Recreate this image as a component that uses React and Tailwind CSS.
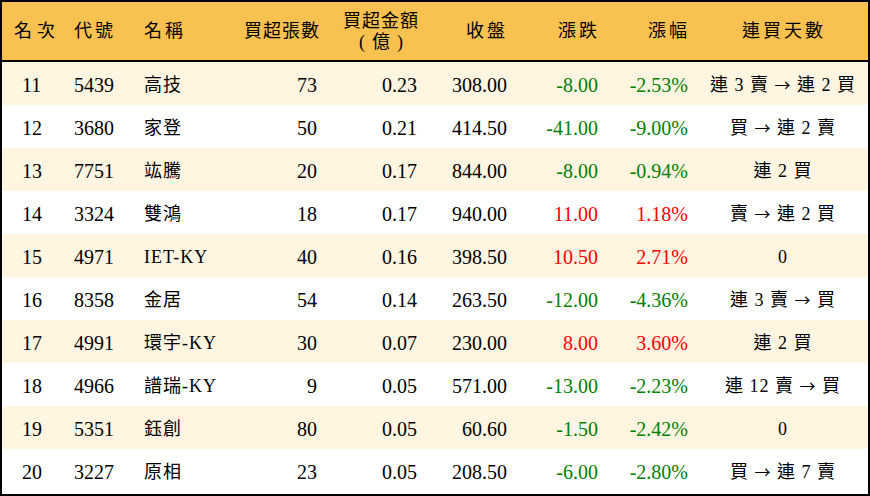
import React from 'react';

const rows = [
  { rank: 11, code: '5439', name: '高技', lots: 73, amount: '0.23', close: '308.00', change: '-8.00', pct: '-2.53%', streak: '連 3 賣 → 連 2 買' },
  { rank: 12, code: '3680', name: '家登', lots: 50, amount: '0.21', close: '414.50', change: '-41.00', pct: '-9.00%', streak: '買 → 連 2 賣' },
  { rank: 13, code: '7751', name: '竑騰', lots: 20, amount: '0.17', close: '844.00', change: '-8.00', pct: '-0.94%', streak: '連 2 買' },
  { rank: 14, code: '3324', name: '雙鴻', lots: 18, amount: '0.17', close: '940.00', change: '11.00', pct: '1.18%', streak: '賣 → 連 2 買' },
  { rank: 15, code: '4971', name: 'IET-KY', lots: 40, amount: '0.16', close: '398.50', change: '10.50', pct: '2.71%', streak: '0' },
  { rank: 16, code: '8358', name: '金居', lots: 54, amount: '0.14', close: '263.50', change: '-12.00', pct: '-4.36%', streak: '連 3 賣 → 買' },
  { rank: 17, code: '4991', name: '環宇-KY', lots: 30, amount: '0.07', close: '230.00', change: '8.00', pct: '3.60%', streak: '連 2 買' },
  { rank: 18, code: '4966', name: '譜瑞-KY', lots: 9, amount: '0.05', close: '571.00', change: '-13.00', pct: '-2.23%', streak: '連 12 賣 → 買' },
  { rank: 19, code: '5351', name: '鈺創', lots: 80, amount: '0.05', close: '60.60', change: '-1.50', pct: '-2.42%', streak: '0' },
  { rank: 20, code: '3227', name: '原相', lots: 23, amount: '0.05', close: '208.50', change: '-6.00', pct: '-2.80%', streak: '買 → 連 7 賣' },
];

const cols = 'grid grid-cols-[63px_70px_80px_112px_100px_90px_91px_90px_1fr]';

// the arrow is drawn from the CJK font, the Latin one is too short
const Streak = ({ text }) => {
  const parts = text.split('→');
  return (
    <span>
      {parts.map((p, i) => (
        <React.Fragment key={i}>
          {i > 0 && <span style={{ fontFamily: '"Noto Sans CJK TC", sans-serif' }} className="text-[16px]">→</span>}
          {p}
        </React.Fragment>
      ))}
    </span>
  );
};

const App = () => {
  return (
    <div
      className="w-[870px] h-[496px] bg-white border-2 border-black text-black"
      style={{ fontFamily: '"Liberation Serif", "Noto Sans CJK TC", serif' }}
    >
      {/* Header */}
      <div className={`${cols} h-[60px] bg-[#f9c14f] border-b-2 border-black items-center text-[18px] tracking-[3px]`}>
        <div className="pl-[12px] tracking-[5px]">名次</div>
        <div className="pl-[9px]">代號</div>
        <div className="pl-[9px]">名稱</div>
        <div className="text-right pr-[7px] tracking-[1px]">買超張數</div>
        <div className="flex justify-end pr-[8px] tracking-[1px]">
          <div className="flex flex-col items-center gap-[1px]">
            <span className="leading-[20px]">買超金額</span>
            <span className="leading-[20px] flex items-center gap-[7px] tracking-[0px]">
              <span>(</span>
              <span>億</span>
              <span>)</span>
            </span>
          </div>
        </div>
        <div className="text-right pr-[9px]">收盤</div>
        <div className="text-right pr-[8px]">漲跌</div>
        <div className="text-right pr-[8px]">漲幅</div>
        <div className="text-center pl-[2px]">連買天數</div>
      </div>

      {/* Rows */}
      {rows.map((r, i) => {
        const up = !r.change.startsWith('-');
        const color = up ? 'text-[#ff0000]' : 'text-[#008000]';
        return (
          <div
            key={r.rank}
            className={`${cols} h-[43px] items-center pt-[3px] text-[20px] whitespace-nowrap ${i % 2 === 0 ? 'bg-[#fff5e0]' : 'bg-white'}`}
          >
            <div className="pl-[20px]">{r.rank}</div>
            <div className="pl-[9px]">{r.code}</div>
            <div className="pl-[9px] text-[18px] tracking-[1px]">{r.name}</div>
            <div className="text-right pr-[10px]">{r.lots}</div>
            <div className="text-right pr-[10px]">{r.amount}</div>
            <div className="text-right pr-[10px]">{r.close}</div>
            <div className={`text-right pr-[10px] ${color}`}>{r.change}</div>
            <div className={`text-right pr-[10px] ${color}`}>{r.pct}</div>
            <div className="text-center text-[18px] tracking-[1px] whitespace-pre">
              <Streak text={r.streak} />
            </div>
          </div>
        );
      })}
    </div>
  );
};

export default App;
